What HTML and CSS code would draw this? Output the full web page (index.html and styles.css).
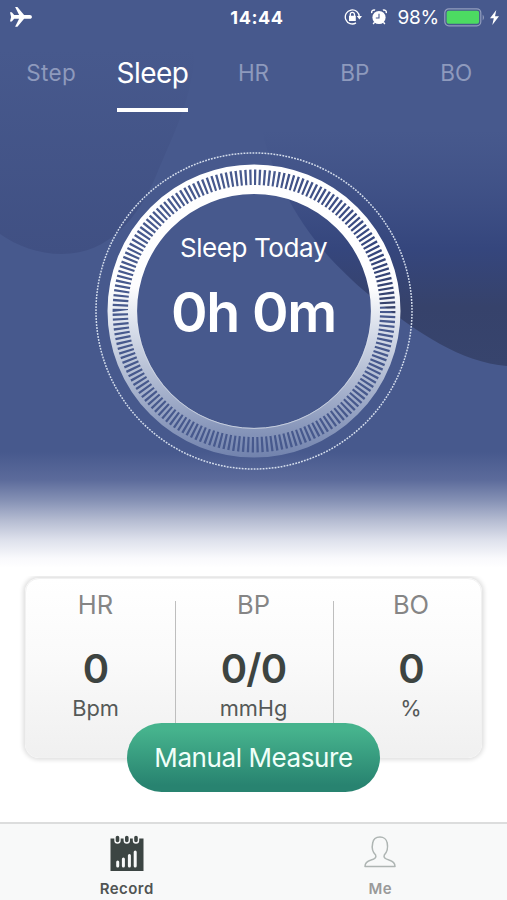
FILE: index.html
```html
<!DOCTYPE html>
<html lang="en">
<head>
<meta charset="utf-8">
<title>Sleep</title>
<link rel="stylesheet" href="styles.css">
</head>
<body>
<div class="screen">
  <section class="hero">
    <svg class="backdrop" viewBox="0 0 507 576" aria-hidden="true">
      <defs>
        <linearGradient id="left" gradientUnits="userSpaceOnUse" x1="0" y1="50" x2="0" y2="254">
          <stop offset="0" stop-color="#405083" stop-opacity="0"/>
          <stop offset="1" stop-color="#405083"/>
        </linearGradient>
        <linearGradient id="right" gradientUnits="userSpaceOnUse" x1="0" y1="130" x2="0" y2="366">
          <stop offset="0" stop-color="#3c4d84" stop-opacity="0"/>
          <stop offset=".5" stop-color="#35467d"/>
          <stop offset=".75" stop-color="#36426b"/>
          <stop offset="1" stop-color="#37446d"/>
        </linearGradient>
      </defs>
      <path fill="url(#left)" d="M0 50H195C192 100 175 130 156 176C139 216 110 254 62 254C38 254 17 246 0 234Z"/>
      <path fill="url(#right)" d="M258 110C266 165 295 220 330 258C345 274 360 288 373 298C420 334 460 362 507 366V110Z"/>
    </svg>
    <header class="status">
      <svg class="plane" viewBox="0 0 22 20"><path fill="#fff" d="M0 5.200h1.800l2.400 2.900h4.900L5.100 0h2.300l6.700 8.100h5.700c2.800 0 2.800 3.600 0 3.600h-5.700L7.400 19.800H5.100l4-8.100H4.200l-2.400 2.900H0l1.100-4.700z"/></svg>
      <span class="time">14:44</span>
      <div class="status-right">
        <svg class="lock" viewBox="0 0 18 18" fill="none" stroke="#fff" stroke-width="1.300"><path d="M15.300 9A7 7 0 1 0 12 14.900"/><path fill="#fff" stroke="none" d="M12.800 8h5.200l-2.600 3.600zM5 7.700h6.800V13H5z"/><path d="M6.300 8V6.500a2.100 2.100 0 0 1 4.200 0V8"/></svg>
        <svg class="alarm" viewBox="0 0 16 16"><circle cx="8" cy="8.500" r="6.600" fill="#fff"/><path d="M8 4.800V9H4.800" fill="none" stroke="#47598d" stroke-width="1.100"/><path d="M.8 4.100a2.400 2.400 0 0 1 3.300-2.900M15.200 4.100a2.400 2.400 0 0 0-3.300-2.900M3.600 13.300l-1.500 1.700M12.400 13.300l1.500 1.700" fill="none" stroke="#fff" stroke-width="1.400"/></svg>
        <span class="percent">98%</span>
        <svg class="battery" viewBox="0 0 42 19"><rect x=".8" y=".8" width="36" height="17" rx="4" fill="none" stroke="#929dbd" stroke-width="1.200"/><rect x="2.600" y="2.800" width="32.500" height="13" rx="2" fill="#4cdb62"/><path d="M38.700 6.500q2.500 3 0 6z" fill="#929dbd"/></svg>
        <svg class="bolt" viewBox="0 0 9 15"><path fill="#fff" d="M6.300 0L0 8.300h3.800L2.300 15 9 6.300H5z"/></svg>
      </div>
    </header>
    <nav class="tabs">
      <span class="tab">Step</span>
      <span class="tab active"><span class="active-label">Sleep</span></span>
      <span class="tab">HR</span>
      <span class="tab">BP</span>
      <span class="tab">BO</span>
    </nav>
    <div class="dial">
      <svg class="dial-art" viewBox="0 0 320 320" aria-hidden="true">
        <defs>
          <linearGradient id="ring" gradientUnits="userSpaceOnUse" x1="0" y1="13" x2="0" y2="307">
            <stop offset="0" stop-color="#fff"/>
            <stop offset=".42" stop-color="#fdfdfe"/>
            <stop offset=".56" stop-color="#d8deea"/>
            <stop offset=".75" stop-color="#abb6cf"/>
            <stop offset="1" stop-color="#7182ad"/>
          </linearGradient>
          <linearGradient id="rim" gradientUnits="userSpaceOnUse" x1="0" y1="160" x2="0" y2="278">
            <stop offset="0" stop-color="#fff" stop-opacity="0"/>
            <stop offset="1" stop-color="#c5cddd"/>
          </linearGradient>
          <mask id="slots" maskUnits="userSpaceOnUse" x="0" y="0" width="320" height="320">
            <rect width="320" height="320" fill="#fff"/>
            <circle cx="160" cy="160" r="133.700" fill="none" stroke="#000" stroke-width="15.400" pathLength="1800" stroke-dasharray="4.800 5.200"/>
          </mask>
        </defs>
        <circle cx="160" cy="160" r="131.700" fill="none" stroke="url(#ring)" stroke-width="29.600" mask="url(#slots)"/>
        <circle cx="160" cy="160" r="117.400" fill="none" stroke="url(#rim)" stroke-width="1"/>
        <circle cx="160" cy="160" r="158" fill="none" stroke="#d5deed" stroke-width="1.500" pathLength="3300" stroke-dasharray="6 4"/>
      </svg>
      <div class="dial-label">Sleep Today</div>
      <div class="dial-value">0h 0m</div>
    </div>
  </section>
  <main class="content">
    <section class="card">
      <div class="metric"><span class="name">HR</span><strong>0</strong><span class="unit">Bpm</span></div>
      <div class="metric divided"><span class="name">BP</span><strong>0/0</strong><span class="unit">mmHg</span></div>
      <div class="metric"><span class="name">BO</span><strong>0</strong><span class="unit">%</span></div>
    </section>
    <button class="measure">Manual Measure</button>
  </main>
  <footer class="bottom">
    <div class="item selected">
      <svg class="icon" viewBox="0 0 36 38"><path fill="#3c4543" d="M1.500 4.500H34.500V37H1.500z"/><g fill="#3c4543" stroke="#f8f9f9" stroke-width="1.400"><rect x="6" y="1" width="5" height="8" rx="2.500"/><rect x="15.300" y="1" width="5" height="8" rx="2.500"/><rect x="24.500" y="1" width="5" height="8" rx="2.500"/></g><path d="M8.700 32v-4M14.400 32v-7M20.400 32V21.500M26.200 32V18" stroke="#f8f9f9" stroke-width="3" stroke-linecap="round"/></svg>
      <span>Record</span>
    </div>
    <div class="item">
      <svg class="icon" viewBox="0 0 36 38"><path fill="none" stroke="#aeb5b3" stroke-width="1.500" stroke-linejoin="round" d="M13.600 21C9.500 17 10 12 10.700 9C12 1 24 1 25.200 9C26 13 25.600 17.500 22.300 21C21.300 23.500 23 24.700 27 26C31.500 27.300 33 29 33 32.500H3C3 29 4.500 27.300 9 26C13 24.700 14.600 23.500 13.600 21Z"/></svg>
      <span>Me</span>
    </div>
  </footer>
</div>
</body>
</html>
```

FILE: styles.css
```css
* { box-sizing: border-box; }
body { margin: 0; }
.screen {
  width: 507px;
  height: 900px;
  display: flex;
  flex-direction: column;
  background: #fff;
  font-family: Inter, "Liberation Sans", sans-serif;
  white-space: nowrap;
  overflow: hidden;
}
.hero {
  position: relative;
  height: 576px;
  background: linear-gradient(#47598d 0, #47598d 452px, #5c6b9b 480px, #8490b4 500px, #b4bbd1 520px, #dee1ec 540px, #f9f9fc 558px, #fff 568px);
}
.backdrop { position: absolute; inset: 0; width: 507px; height: 576px; }
.status {
  position: relative;
  display: grid;
  grid-template-columns: 1fr auto 1fr;
  align-items: center;
  height: 34px;
  padding: 0 8px 0 10px;
  color: #fff;
}
.plane { width: 22px; height: 20px; }
.time { font-size: 18px; font-weight: 650; letter-spacing: .6px; padding-left: 5px; }
.status-right { display: flex; align-items: center; justify-content: flex-end; }
.lock { width: 18px; height: 18px; margin-right: 9px; }
.alarm { width: 16px; height: 16px; margin-right: 10px; }
.percent { font-size: 19px; line-height: 20px; margin: 1px 5px 0 0; letter-spacing: -.2px; }
.battery { width: 42px; height: 19px; margin-right: 4px; }
.bolt { width: 9px; height: 15px; }
.tabs {
  position: relative;
  display: grid;
  grid-template-columns: repeat(5, 1fr);
  height: 78px;
  color: #8e9abd;
  font-size: 22.5px;
  line-height: 78px;
  text-align: center;
}
.tab:first-child { letter-spacing: .3px; padding-left: 1px; }
.active { color: #fff; font-size: 28px; letter-spacing: -.55px; }
.active-label { display: inline-block; width: 71px; height: 78px; border-bottom: 4px solid #fff; }
.dial {
  position: relative;
  width: 320px;
  height: 320px;
  margin: 39px auto 0;
  color: #fff;
  text-align: center;
  padding-top: 80px;
}
.dial-art { position: absolute; inset: 0; width: 320px; height: 320px; }
.dial-label { position: relative; font-size: 26px; line-height: 34px; letter-spacing: -.4px; }
.dial-value { position: relative; margin-top: 15px; font-size: 55.5px; line-height: 64px; font-weight: 600; letter-spacing: -1.2px; }
.content { height: 246px; display: flex; flex-direction: column; align-items: center; }
.card {
  display: grid;
  grid-template-columns: 150px 158px 1fr;
  flex: none;
  width: 457px;
  height: 180px;
  margin-top: 2px;
  border: 1px solid #f1f1f1;
  border-radius: 14px;
  background: linear-gradient(#fff, #fafafa 45%, #f0f0f0);
  box-shadow: 0 0 4px 2px rgba(0, 0, 0, .13);
}
.metric { display: flex; flex-direction: column; align-items: center; padding-top: 9px; }
.metric:first-child { padding-right: 11px; }
.metric:last-child { padding-left: 7px; }
.metric .name { color: #858585; font-size: 25.5px; line-height: 34px; }
.metric strong { color: #3d4441; font-size: 40px; line-height: 50px; font-weight: 600; margin-top: 22px; letter-spacing: -.8px; }
.unit { color: #555958; font-size: 21.8px; line-height: 28px; letter-spacing: -.1px; }
.divided { margin: 22px 0 0 -1px; padding: 0 2px 0 0; border: solid #bebebe; border-width: 0 1.500px; }
.divided .name { margin-top: -13px; }
.measure {
  position: relative;
  flex: none;
  width: 253px;
  height: 69px;
  margin-top: -35px;
  padding: 0;
  border: 0;
  border-radius: 35px;
  color: #f0fff9;
  background: linear-gradient(#46b38d 10%, #288370 90%);
  font: 26px/70px Inter, "Liberation Sans", sans-serif;
  letter-spacing: -.42px;
}
.bottom {
  display: grid;
  grid-template-columns: 1fr 1fr;
  height: 78px;
  border-top: 2px solid #dcdddd;
  background: #f8f9f9;
}
.item { display: flex; flex-direction: column; align-items: center; padding-top: 10px; color: #9a9a9a; font-size: 15px; line-height: 20px; font-weight: 600; letter-spacing: .45px; }
.selected { color: #505453; }
.icon { width: 36px; height: 38px; margin-bottom: 7px; }
```
